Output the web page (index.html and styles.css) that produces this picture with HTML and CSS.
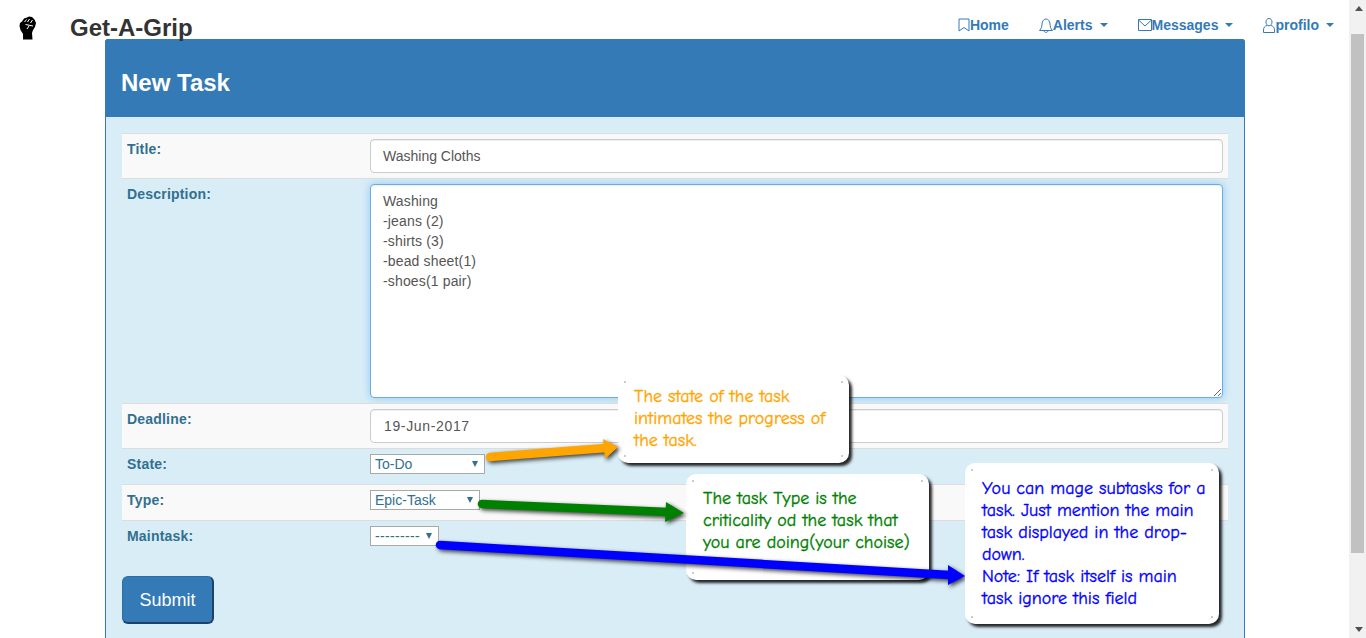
FILE: index.html
```html
<!DOCTYPE html>
<html lang="en">
<head>
    <meta charset="UTF-8">
    <meta name="viewport" content="width=device-width, initial-scale=1.0">
    <title>Get-A-Grip - New Task</title>
    <link rel="stylesheet" href="styles.css">
</head>
<body>
    <div class="page">
        <header class="navbar">
            <a class="brand" href="#">
                <svg class="brand-logo" viewBox="0 0 17 24" width="17" height="24">
                    <path fill="#000" d="M1 7 L3 5.500 L5 2.500 L8 1.500 L10 0.500 L13 1 L15.500 3.500 L17 7 L16 11 L14 14 L13 17 L13.500 23.500 L4 23.500 L4 18 L1.500 14 L0.500 10 Z"/>
                    <path fill="none" stroke="#fff" stroke-width="1" d="M5.500 6 L7.500 3.500 M8.500 6 L10.500 3 M11.500 7 L13.500 4 M6.500 8.500 L14 10 M10 10 L8 13"/>
                </svg>
                <span class="brand-name">Get-A-Grip</span>
            </a>
            <nav class="nav">
                <a class="nav-item" href="#">
                    <svg class="nav-icon" viewBox="0 0 12 14" width="12" height="14"><path d="M1 1 H11 V13 L6 9.500 L1 13 Z"/></svg>Home
                </a>
                <a class="nav-item" href="#">
                    <svg class="nav-icon" viewBox="0 0 14 15" width="14" height="15"><path d="M0.500 12.500 C2.500 10.500 2.800 8.500 3 6 C3.200 3 4.800 1 7 1 C9.200 1 10.800 3 11 6 C11.200 8.500 11.500 10.500 13.500 12.500 Z M5 12.500 C5 15 9 15 9 12.500"/></svg>Alerts<span class="caret"></span>
                </a>
                <a class="nav-item" href="#">
                    <svg class="nav-icon" viewBox="0 0 14 12" width="14" height="12"><path d="M0.500 0.500 H13.500 V11.500 H0.500 Z M0.500 1 L7 7 L13.500 1"/></svg>Messages<span class="caret"></span>
                </a>
                <a class="nav-item" href="#">
                    <svg class="nav-icon" viewBox="0 0 12 15" width="12" height="15"><path d="M6 0.500 C8 0.500 9 2.200 9 4 C9 6 7.800 7.800 6 7.800 C4.200 7.800 3 6 3 4 C3 2.200 4 0.500 6 0.500 Z M4 7.500 C2 8 0.500 9.500 0.500 12 V14.500 H11.500 V12 C11.500 9.500 10 8 8 7.500"/></svg>profilo<span class="caret"></span>
                </a>
            </nav>
        </header>

        <main class="panel">
            <div class="panel-heading">New Task</div>
            <form class="panel-body">
                <table class="task-table">
                    <tr class="striped">
                        <th>Title:</th>
                        <td><input class="field" type="text" value="Washing Cloths"></td>
                    </tr>
                    <tr>
                        <th>Description:</th>
                        <td><textarea class="field field-area">Washing
-jeans (2)
-shirts (3)
-bead sheet(1)
-shoes(1 pair)</textarea></td>
                    </tr>
                    <tr class="striped">
                        <th>Deadline:</th>
                        <td><input class="field field-date" type="text" value="19-Jun-2017"></td>
                    </tr>
                    <tr class="short">
                        <th>State:</th>
                        <td><span class="select-wrap"><select class="select select-state"><option>To-Do</option></select></span></td>
                    </tr>
                    <tr class="striped short">
                        <th>Type:</th>
                        <td><span class="select-wrap"><select class="select select-type"><option>Epic-Task</option></select></span></td>
                    </tr>
                    <tr class="short">
                        <th>Maintask:</th>
                        <td><span class="select-wrap"><select class="select select-main"><option>---------</option></select></span></td>
                    </tr>
                </table>
                <button class="submit" type="button">Submit</button>
            </form>
        </main>

        <div class="note note-state">The state of the task<br>intimates the progress of<br>the task.</div>
        <div class="note note-type">The task Type is the<br>criticality od the task that<br>you are doing(your choise)</div>

        <svg class="arrows" viewBox="0 0 1349 638" width="1349" height="638">
            <g class="arrow-orange">
                <path class="arrow-line" d="M490 457 L606 448"/>
                <path d="M603 439 L618 447 L605 459 Z"/>
            </g>
            <g class="arrow-green">
                <path class="arrow-line" d="M482 504 L668 512"/>
                <path d="M666 502 L684 513 L665 522 Z"/>
            </g>
            <g class="arrow-blue">
                <path class="arrow-line" d="M440 545 L950 575"/>
                <path d="M948 565 L965 576 L948 585 Z"/>
            </g>
        </svg>

        <div class="note note-main">You can mage subtasks for a<br>task. Just mention the main<br>task displayed in the drop-<br>down.<br>Note: If task itself is main<br>task ignore this field</div>
    </div>

    <div class="scrollbar">
        <div class="scroll-track"><span class="scroll-up"></span></div>
        <div class="scroll-thumb"></div>
        <div class="scroll-end"><span class="scroll-down"></span></div>
    </div>
</body>
</html>
```

FILE: styles.css
```css
:root {
    --primary: #337ab7;
    --info-bg: #d9edf7;
    --info-text: #31708f;
    --row-line: #ddd;
}

* {
    box-sizing: border-box;
}

html,
body {
    margin: 0;
    height: 638px;
    overflow: hidden;
}

body {
    display: flex;
    font-family: "Liberation Sans", Arial, sans-serif;
    font-size: 14px;
    line-height: 20px;
    color: #333;
    background-color: #fff;
}

.page {
    position: relative;
    flex: 1;
    min-width: 0;
}

/* top bar, the panel starts before the bar's content ends */
.navbar {
    display: flex;
    justify-content: space-between;
    height: 39px;
    padding: 0 15px 0 19px;
}

.brand {
    display: flex;
    align-items: flex-start;
    gap: 34px;
    padding-top: 16px;
    color: #333;
    text-decoration: none;
}

.brand-name {
    position: relative;
    z-index: 1;
    font-size: 24px;
    line-height: 24px;
    font-weight: bold;
}

.nav {
    display: flex;
    gap: 30px;
    padding-top: 15px;
}

.nav-item {
    display: flex;
    align-items: center;
    height: 20px;
    color: var(--primary);
    font-weight: bold;
    text-decoration: none;
}

.nav-icon {
    fill: none;
    stroke: var(--primary);
    stroke-width: 1;
}

.caret {
    width: 0;
    height: 0;
    margin-left: 7px;
    border-top: 4px solid var(--primary);
    border-left: 4px solid transparent;
    border-right: 4px solid transparent;
}

.panel {
    width: 1140px;
    height: 599px;
    margin-left: 105px;
    border: 1px solid var(--primary);
    border-bottom: 0;
    border-radius: 4px 4px 0 0;
    background-color: var(--info-bg);
}

.panel-heading {
    height: 78px;
    margin: -1px -1px 0;
    padding: 29px 16px 0;
    border-radius: 3px 3px 0 0;
    background-color: var(--primary);
    color: #fff;
    font-size: 24px;
    line-height: 30px;
    font-weight: bold;
}

.panel-body {
    padding: 16px 16px 0;
}

.task-table {
    width: 1106px;
    margin-bottom: 19px;
    border-collapse: collapse;
    table-layout: fixed;
}

.task-table tr {
    border-top: 1px solid var(--row-line);
}

.task-table tr.short {
    height: 36px;
}

.task-table .striped {
    background-color: #f9f9f9;
}

.task-table th {
    width: 243px;
    padding: 5px;
    color: var(--info-text);
    text-align: left;
    vertical-align: top;
    letter-spacing: 0.2px;
}

.task-table td {
    padding: 5px;
    vertical-align: top;
}

.field {
    display: block;
    width: 100%;
    height: 34px;
    padding: 6px 12px;
    border: 1px solid #ccc;
    border-radius: 4px;
    background-color: #fff;
    box-shadow: inset 0 1px 1px rgba(0, 0, 0, 0.075);
    color: #555;
    font-family: inherit;
    font-size: 14px;
    line-height: 20px;
}

.field-area {
    height: 214px;
    border-color: #66afe9;
    box-shadow: inset 0 1px 1px rgba(0, 0, 0, 0.075), 0 0 8px rgba(102, 175, 233, 0.6);
    letter-spacing: 0.15px;
    outline: none;
}

.field-date {
    padding-left: 13px;
    letter-spacing: 0.65px;
}

.select-wrap {
    position: relative;
    display: block;
    width: max-content;
    height: 20px;
}

.select-wrap::after {
    content: "";
    position: absolute;
    top: 7px;
    right: 7px;
    border-top: 6px solid var(--info-text);
    border-left: 3px solid transparent;
    border-right: 3px solid transparent;
}

.select {
    display: block;
    height: 20px;
    padding: 0 0 0 4px;
    border: 1px solid #a9a9a9;
    border-radius: 0;
    background-color: #fff;
    color: var(--info-text);
    font-family: inherit;
    font-size: 14px;
    appearance: none;
}

.select-state {
    width: 115px;
}

.select-type {
    width: 110px;
}

.select-main {
    width: 69px;
    letter-spacing: 0.33px;
}

.submit {
    display: block;
    width: 92px;
    height: 48px;
    padding: 2px 0 0;
    border: solid #1d4468;
    border-width: 1px 2px 2px 1px;
    border-top-color: #2e6da4;
    border-left-color: #2e6da4;
    border-radius: 6px;
    background-color: var(--primary);
    color: #fff;
    font-family: inherit;
    font-size: 18px;
}

/* annotations drawn over the form */
.note {
    position: absolute;
    padding: 11px 16px;
    border-radius: 10px;
    background-color: #fff;
    background-image:
        linear-gradient(#ccc, #ccc), linear-gradient(#ccc, #ccc),
        linear-gradient(#ccc, #ccc), linear-gradient(#ccc, #ccc);
    background-repeat: no-repeat;
    background-size: 2px 2px;
    background-position: 6px 6px, calc(100% - 6px) 6px, 6px calc(100% - 6px), calc(100% - 6px) calc(100% - 6px);
    box-shadow: 3px 3px 3px rgba(0, 0, 0, 0.85);
    font-family: "Comic Sans MS", "Comic Neue", cursive;
    font-size: 18px;
    line-height: 22px;
    -webkit-text-stroke: 0.35px currentColor;
    white-space: nowrap;
}

.note-state {
    left: 618px;
    top: 375px;
    width: 231px;
    height: 88px;
    color: #ffa500;
}

.note-type {
    left: 686px;
    top: 474px;
    width: 243px;
    height: 106px;
    padding: 14px 17px;
    color: #008000;
}

.note-main {
    left: 965px;
    top: 463px;
    width: 254px;
    height: 161px;
    padding: 15px 17px;
    color: #00f;
}

.arrows {
    position: absolute;
    left: 0;
    top: 0;
    pointer-events: none;
    filter: drop-shadow(2px 2px 2px rgba(0, 0, 0, 0.75));
}

.arrow-line {
    fill: none;
    stroke-width: 8.5;
    stroke-linecap: round;
}

.arrow-orange {
    fill: #ffa500;
    stroke: #ffa500;
}

.arrow-green {
    fill: #008000;
    stroke: #008000;
}

.arrow-blue {
    fill: #00f;
    stroke: #00f;
}

.arrows path:not(.arrow-line) {
    stroke: none;
}

.scrollbar {
    display: grid;
    grid-template-rows: 34px 519px 1fr;
    flex: none;
    width: 17px;
    padding-left: 2px;
    background-color: #f1f1f1;
}

.scroll-track {
    display: flex;
    justify-content: center;
    padding-top: 6px;
}

.scroll-thumb {
    width: 13px;
    background-color: #c1c1c1;
}

.scroll-end {
    display: flex;
    align-items: flex-end;
    justify-content: center;
    padding-bottom: 6px;
}

.scroll-up {
    width: 0;
    height: 0;
    border-bottom: 5px solid #505050;
    border-left: 4px solid transparent;
    border-right: 4px solid transparent;
}

.scroll-down {
    width: 0;
    height: 0;
    border-top: 5px solid #505050;
    border-left: 4px solid transparent;
    border-right: 4px solid transparent;
}
```
